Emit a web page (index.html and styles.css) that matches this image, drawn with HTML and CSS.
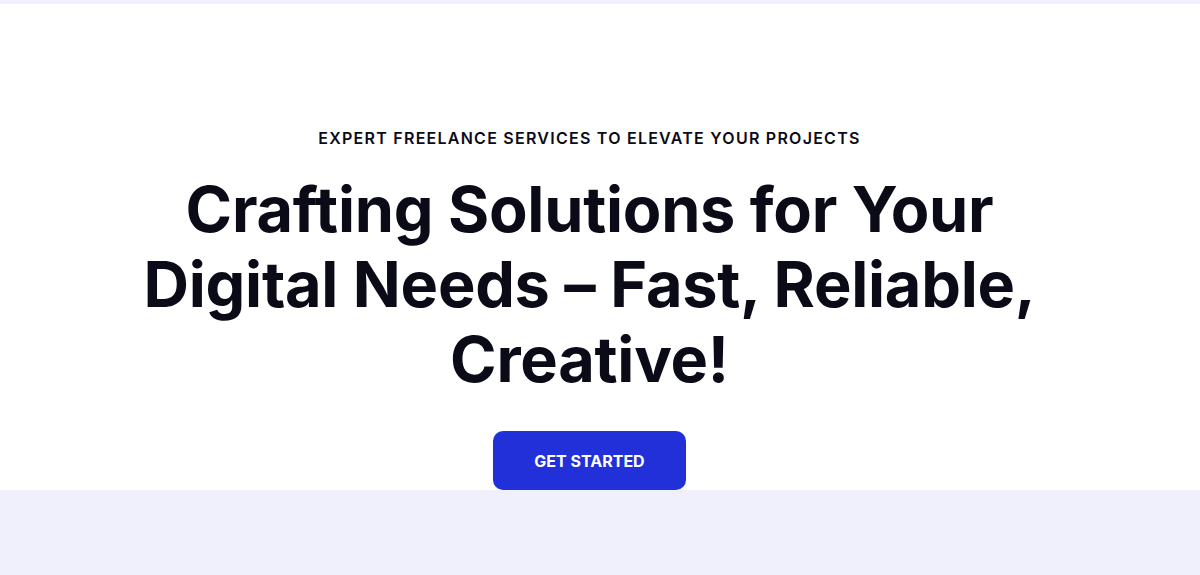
FILE: index.html
```html
<!DOCTYPE html>
<html lang="en">
<head>
  <meta charset="UTF-8">
  <title>Freelance Services</title>
  <link rel="stylesheet" href="styles.css">
</head>
<body>
  <div class="topbar"></div>
  <section class="hero">
    <p class="eyebrow">Expert Freelance Services to Elevate Your Projects</p>
    <h1 class="title">Crafting Solutions for Your Digital Needs – Fast, Reliable, Creative!</h1>
    <a class="cta" href="#">Get Started</a>
  </section>
  <section class="below"></section>
</body>
</html>
```

FILE: styles.css
```css
html {
  background: #f0f0fc;
}
body {
  margin: 0;
  font-family: Inter, "Noto Sans", sans-serif;
  color: #0b0b17;
}
.topbar {
  height: 4px;
  background: #f0f0fc;
}
.hero {
  background: white;
  display: flex;
  flex-direction: column;
  align-items: center;
  text-align: center;
  padding: 122px 31px 0 10px;
}
.eyebrow {
  margin: 0;
  font-size: 16px;
  line-height: 24px;
  font-weight: 600;
  letter-spacing: 0.078em;
  text-transform: uppercase;
}
.title {
  margin: 22px 0 0;
  max-width: 920px;
  font-size: 63px;
  line-height: 75px;
  font-weight: 700;
  letter-spacing: -0.004em;
}
.cta {
  margin-top: 34px;
  display: flex;
  align-items: center;
  justify-content: center;
  width: 193px;
  height: 59px;
  box-sizing: border-box;
  background: #2130d9;
  color: white;
  border-radius: 10px;
  text-decoration: none;
  font-size: 16px;
  font-weight: 700;
  text-transform: uppercase;
}
.below {
  height: 100px;
}
```
